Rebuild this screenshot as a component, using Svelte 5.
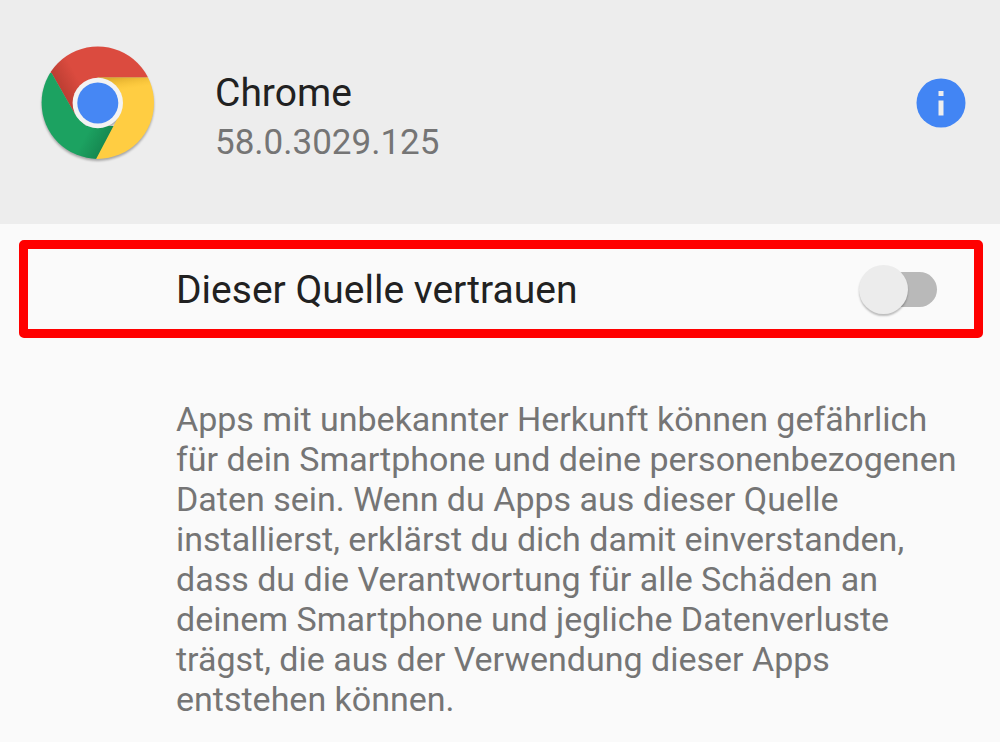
<script lang="ts">
  let app = $state({ name: 'Chrome', version: '58.0.3029.125' });
  let trusted = $state(false);
</script>

<main>
  <header>
    <svg class="logo" viewBox="8 7 120 120" role="img" aria-label={`${app.name} logo`}>
      <defs>
        <clipPath id="disc"><circle cx="67.8" cy="66.7" r="56.2" /></clipPath>
        <linearGradient id="red-shade" gradientUnits="userSpaceOnUse" x1="33" y1="58" x2="51" y2="48">
          <stop offset="0" stop-color="#8e2b20" stop-opacity="0.4" />
          <stop offset="1" stop-color="#8e2b20" stop-opacity="0" />
        </linearGradient>
        <linearGradient id="yellow-shade" gradientUnits="userSpaceOnUse" x1="88" y1="41" x2="90" y2="54">
          <stop offset="0" stop-color="#a8740c" stop-opacity="0.4" />
          <stop offset="1" stop-color="#e5a91c" stop-opacity="0" />
        </linearGradient>
        <linearGradient id="green-shade" gradientUnits="userSpaceOnUse" x1="78" y1="102" x2="60" y2="92">
          <stop offset="0" stop-color="#0a5a34" stop-opacity="0.35" />
          <stop offset="1" stop-color="#0a5a34" stop-opacity="0" />
        </linearGradient>
      </defs>
      <g clip-path="url(#disc)">
        <path d="M8 7H128V41.5H67.8L45.5 79 21.6 37 8 30Z" fill="#db4b3f" />
        <path d="M8 7H128V41.5H67.8L45.5 79 21.6 37 8 30Z" fill="url(#red-shade)" />
        <path d="M21.6 37L45.5 79 56 90H88L66 123.5V127H0V37Z" fill="#1ca261" />
        <path d="M21.6 37L45.5 79 56 90H88L66 123.5V127H0V37Z" fill="url(#green-shade)" />
        <path d="M67.8 41.5H128V127H64L89 79.5Z" fill="#ffcd42" />
        <path d="M67.8 41.5H128V127H64L89 79.5Z" fill="url(#yellow-shade)" />
      </g>
      <circle cx="67.8" cy="67" r="25.2" fill="#f3f3f3" />
      <circle cx="67.8" cy="67" r="20.5" fill="#4687f4" />
    </svg>
    <div class="app">
      <h1>{app.name}</h1>
      <p>{app.version}</p>
    </div>
    <button class="info" type="button" aria-label="App-Info">
      <svg viewBox="0 0 50 50" aria-hidden="true">
        <circle cx="25" cy="25" r="24.5" fill="#4285f4" />
        <path d="M22.5 13h5v5h-5zM22.5 22.5h5v15h-5z" fill="#eee" />
      </svg>
    </button>
  </header>

  <div class="setting">
    <label for="trust">Dieser Quelle vertrauen</label>
    <input id="trust" type="checkbox" role="switch" bind:checked={trusted} />
  </div>

  <p class="warning">
    Apps mit unbekannter Herkunft können gefährlich für dein Smartphone und deine
    personenbezogenen Daten sein. Wenn du Apps aus dieser Quelle installierst,
    erklärst du dich damit einverstanden, dass du die Verantwortung für alle Schäden
    an deinem Smartphone und jegliche Datenverluste trägst, die aus der Verwendung
    dieser Apps entstehen können.
  </p>
</main>

<style>
  :global(body) {
    background: #fafafa;
  }
  main {
    font-family: Roboto, 'Noto Sans', sans-serif;
    color: #212121;
  }
  header {
    display: flex;
    align-items: center;
    padding: 38px 34px 56px 38px;
    background: #ededed;
  }
  .logo {
    flex: none;
    width: 120px;
    height: 120px;
    filter: drop-shadow(0 2px 1px rgb(0 0 0 / 0.3));
  }
  .app {
    flex: 1;
    margin-left: 57px;
    padding-top: 30px;
  }
  h1, p {
    margin: 0;
    font-weight: 400;
  }
  h1 {
    font-size: 39px;
    line-height: 50px;
  }
  p {
    font-size: 34px;
    line-height: 40px;
    color: #757575;
  }
  .app p {
    font-size: 35px;
    line-height: 50px;
  }
  .info {
    width: 50px;
    height: 50px;
    padding: 0;
    border: 0;
    background: none;
    cursor: pointer;
    svg {
      display: block;
    }
  }
  .setting {
    display: flex;
    align-items: center;
    justify-content: space-between;
    margin: 16px 17px 0 19px;
    padding: 16px 37px 14px 148px;
    border: 9px solid #f00;
    border-radius: 5px;
  }
  label {
    font-size: 39px;
    line-height: 50px;
  }
  #trust {
    position: relative;
    appearance: none;
    width: 78px;
    height: 50px;
    margin: 0;
    cursor: pointer;
    &::before {
      content: '';
      position: absolute;
      inset: 7px 0 8px 6px;
      border-radius: 18px;
      background: #b9b9b9;
    }
    &::after {
      content: '';
      position: absolute;
      top: 0;
      left: 0;
      width: 49px;
      height: 49px;
      border-radius: 50%;
      background: #ececec;
      box-shadow: 0 2px 2px rgb(0 0 0 / 0.25);
      transition: left 0.15s;
    }
    &:checked::before {
      background: #a1c2fa;
    }
    &:checked::after {
      left: 29px;
      background: #4285f4;
    }
  }
  .warning {
    padding: 61px 30px 22px 176px;
  }
</style>
